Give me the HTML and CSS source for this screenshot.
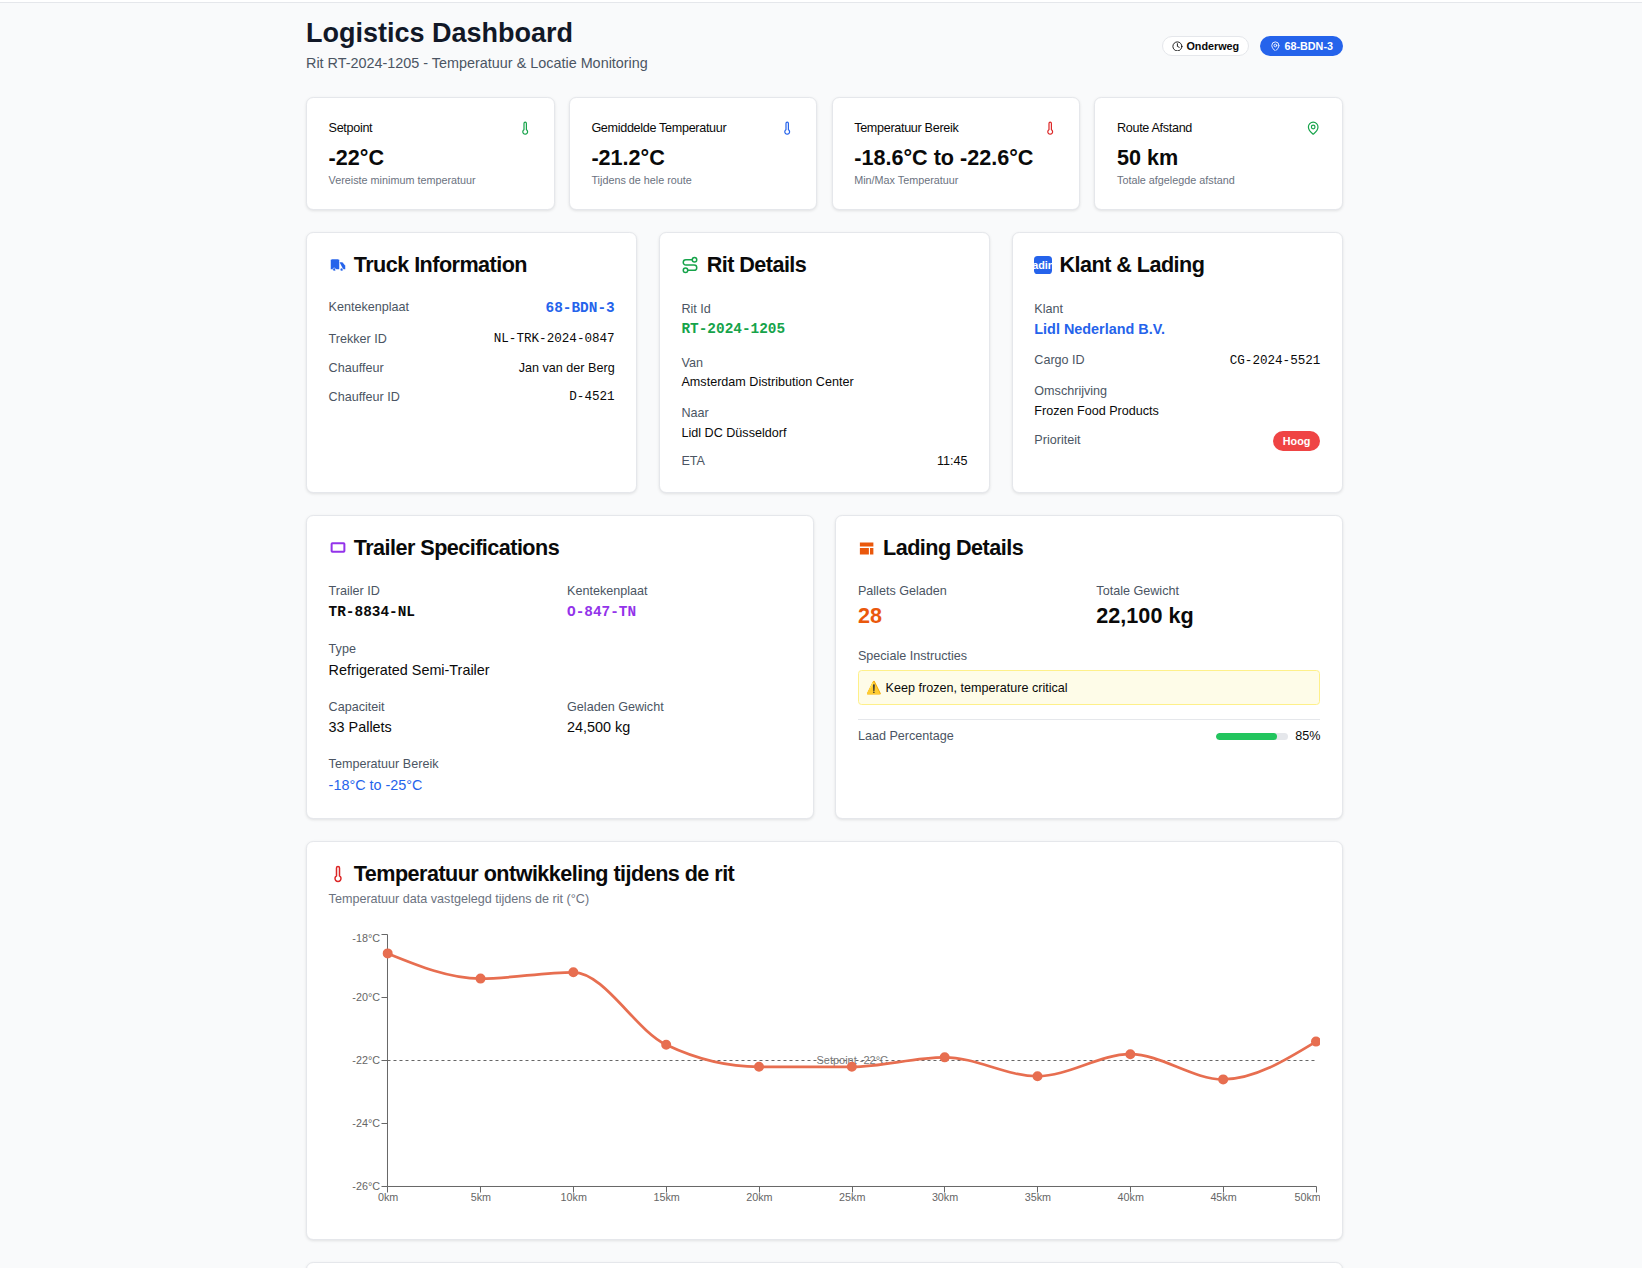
FILE: index.html
```html
<!DOCTYPE html>
<html>
<head>
<meta name="viewport" content="width=device-width, initial-scale=1">
<title>Logistics Dashboard</title>
<link rel="stylesheet" href="styles.css">
</head>
<body>
<div class="topbar"></div>
<div class="page">

  <header class="header">
    <div>
      <h1 class="page-title">Logistics Dashboard</h1>
      <p class="page-sub">Rit RT-2024-1205 - Temperatuur &amp; Locatie Monitoring</p>
    </div>
    <div class="header-badges">
      <span class="badge badge-outline">
        <svg class="badge-icon" viewBox="0 0 24 24"><circle cx="12" cy="12" r="10"/><path d="M12 6v6l4 2"/></svg>
        Onderweg
      </span>
      <span class="badge badge-blue">
        <svg class="badge-icon" viewBox="0 0 24 24"><path d="M20 10c0 5-5.5 10.2-7.4 11.8a1 1 0 0 1-1.2 0C9.5 20.2 4 15 4 10a8 8 0 0 1 16 0"/><circle cx="12" cy="10" r="3"/></svg>
        68-BDN-3
      </span>
    </div>
  </header>

  <!-- stats -->
  <section class="stats">
    <div class="card stat">
      <div class="stat-head">
        <span class="stat-label">Setpoint</span>
        <svg class="stat-icon green" viewBox="0 0 24 24"><path d="M14 4v10.54a4 4 0 1 1-4 0V4a2 2 0 0 1 4 0Z"/></svg>
      </div>
      <div class="stat-value">-22°C</div>
      <div class="stat-sub">Vereiste minimum temperatuur</div>
    </div>
    <div class="card stat">
      <div class="stat-head">
        <span class="stat-label">Gemiddelde Temperatuur</span>
        <svg class="stat-icon blue" viewBox="0 0 24 24"><path d="M14 4v10.54a4 4 0 1 1-4 0V4a2 2 0 0 1 4 0Z"/></svg>
      </div>
      <div class="stat-value">-21.2°C</div>
      <div class="stat-sub">Tijdens de hele route</div>
    </div>
    <div class="card stat">
      <div class="stat-head">
        <span class="stat-label">Temperatuur Bereik</span>
        <svg class="stat-icon red" viewBox="0 0 24 24"><path d="M14 4v10.54a4 4 0 1 1-4 0V4a2 2 0 0 1 4 0Z"/></svg>
      </div>
      <div class="stat-value">-18.6°C to -22.6°C</div>
      <div class="stat-sub">Min/Max Temperatuur</div>
    </div>
    <div class="card stat">
      <div class="stat-head">
        <span class="stat-label">Route Afstand</span>
        <svg class="stat-icon green" viewBox="0 0 24 24"><path d="M20 10c0 5-5.5 10.2-7.4 11.8a1 1 0 0 1-1.2 0C9.5 20.2 4 15 4 10a8 8 0 0 1 16 0"/><circle cx="12" cy="10" r="3"/></svg>
      </div>
      <div class="stat-value">50 km</div>
      <div class="stat-sub">Totale afgelegde afstand</div>
    </div>
  </section>

  <!-- truck / rit / klant -->
  <section class="three-cols">
    <div class="card panel">
      <h2 class="card-title">
        <svg class="title-icon truck-icon" viewBox="0 0 24 24"><path d="M14 18V6a2 2 0 0 0-2-2H4a2 2 0 0 0-2 2v11a1 1 0 0 0 1 1h2"/><path d="M15 18H9"/><path d="M19 18h2a1 1 0 0 0 1-1v-3.65a1 1 0 0 0-.22-.624l-3.48-4.35A1 1 0 0 0 17.52 8H14"/><circle cx="17" cy="18" r="2"/><circle cx="7" cy="18" r="2"/></svg>
        Truck Information
      </h2>
      <div class="truck-rows">
        <div class="row plate-row"><span class="label label-up">Kentekenplaat</span><span class="mono-bold blue-text">68-BDN-3</span></div>
        <div class="row"><span class="label">Trekker ID</span><span class="mono">NL-TRK-2024-0847</span></div>
        <div class="row"><span class="label">Chauffeur</span><span class="value-sm">Jan van der Berg</span></div>
        <div class="row"><span class="label">Chauffeur ID</span><span class="mono">D-4521</span></div>
      </div>
    </div>

    <div class="card panel">
      <h2 class="card-title">
        <svg class="title-icon green" viewBox="0 0 24 24"><circle cx="6" cy="19" r="3"/><path d="M9 19h8.5a3.5 3.5 0 0 0 0-7h-11a3.5 3.5 0 0 1 0-7H15"/><circle cx="18" cy="5" r="3"/></svg>
        Rit Details
      </h2>
      <div class="field rit-first">
        <div class="label field-label label-low">Rit Id</div>
        <div class="mono-bold green-text field-big">RT-2024-1205</div>
      </div>
      <div class="field rit-mid">
        <div class="label field-label label-low">Van</div>
        <div class="value-sm">Amsterdam Distribution Center</div>
      </div>
      <div class="field rit-last">
        <div class="label field-label">Naar</div>
        <div class="value-sm">Lidl DC Düsseldorf</div>
      </div>
      <div class="row"><span class="label">ETA</span><span class="value-sm">11:45</span></div>
    </div>

    <div class="card panel">
      <h2 class="card-title">
        <span class="title-chip">Lading</span>
        Klant &amp; Lading
      </h2>
      <div class="field">
        <div class="label field-label label-low">Klant</div>
        <div class="klant-name">Lidl Nederland B.V.</div>
      </div>
      <div class="row cargo-row"><span class="label label-up">Cargo ID</span><span class="mono">CG-2024-5521</span></div>
      <div class="field omschrijving">
        <div class="label field-label">Omschrijving</div>
        <div class="value-sm">Frozen Food Products</div>
      </div>
      <div class="row priority-row"><span class="label">Prioriteit</span><span class="badge badge-red">Hoog</span></div>
    </div>
  </section>

  <!-- trailer / lading -->
  <section class="two-cols">
    <div class="card panel">
      <h2 class="card-title">
        <svg class="title-icon trailer-icon" viewBox="0 0 24 24"><rect x="3.5" y="5.7" width="17" height="11.4" rx="1"/></svg>
        Trailer Specifications
      </h2>
      <div class="spec-grid">
        <div>
          <div class="label field-label">Trailer ID</div>
          <div class="mono-bold field-big">TR-8834-NL</div>
        </div>
        <div>
          <div class="label field-label">Kentekenplaat</div>
          <div class="mono-bold purple-text field-big">O-847-TN</div>
        </div>
        <div class="span-2 type-field">
          <div class="label field-label">Type</div>
          <div class="value">Refrigerated Semi-Trailer</div>
        </div>
        <div>
          <div class="label field-label label-low">Capaciteit</div>
          <div class="value">33 Pallets</div>
        </div>
        <div>
          <div class="label field-label label-low">Geladen Gewicht</div>
          <div class="value">24,500 kg</div>
        </div>
        <div class="span-2">
          <div class="label field-label">Temperatuur Bereik</div>
          <div class="value blue-text">-18°C to -25°C</div>
        </div>
      </div>
    </div>

    <div class="card panel">
      <h2 class="card-title">
        <svg class="title-icon cargo-icon" viewBox="0 0 24 24"><path d="M2.5 4.5h18V10h-18zM2.5 12h12v8.5h-12zM16 12h4.5v8.5H16z"/></svg>
        Lading Details
      </h2>
      <div class="load-grid">
        <div>
          <div class="label field-label">Pallets Geladen</div>
          <div class="big-num orange-text">28</div>
        </div>
        <div>
          <div class="label field-label">Totale Gewicht</div>
          <div class="big-num">22,100 kg</div>
        </div>
      </div>
      <div class="label field-label">Speciale Instructies</div>
      <div class="note">⚠️ Keep frozen, temperature critical</div>
      <div class="load-row">
        <span class="label">Laad Percentage</span>
        <div class="load-progress">
          <div class="bar"><div class="bar-fill" style="width:85%"></div></div>
          <span class="value-sm">85%</span>
        </div>
      </div>
    </div>
  </section>

  <!-- chart -->
  <section class="card panel chart-card">
    <h2 class="card-title">
      <svg class="title-icon red" viewBox="0 0 24 24"><path d="M14 4v10.54a4 4 0 1 1-4 0V4a2 2 0 0 1 4 0Z"/></svg>
      Temperatuur ontwikkeling tijdens de rit
    </h2>
    <p class="chart-sub">Temperatuur data vastgelegd tijdens de rit (°C)</p>
    <svg class="chart" width="991.8" height="288" viewBox="0 0 991.8 288">
      <!-- axes -->
      <path class="axis" d="M58.5 5.5V257.5H987.5"/>
      <path class="axis" d="M52.5 5.5h6M52.5 68.5h6M52.5 131.5h6M52.5 194.5h6M52.5 257.5h6"/>
      <path class="axis" d="M58.5 257.5v6M151.5 257.5v6M244.5 257.5v6M337.5 257.5v6M430.5 257.5v6M523.5 257.5v6M615.5 257.5v6M708.5 257.5v6M801.5 257.5v6M894.5 257.5v6M987.5 257.5v6"/>
      <g class="tick tick-y">
        <text x="51" y="12.9">-18°C</text>
        <text x="51" y="71.8">-20°C</text>
        <text x="51" y="134.8">-22°C</text>
        <text x="51" y="197.8">-24°C</text>
        <text x="51" y="260.8">-26°C</text>
      </g>
      <g class="tick tick-x">
        <text x="59.1" y="272.5">0km</text>
        <text x="151.93" y="272.5">5km</text>
        <text x="244.76" y="272.5">10km</text>
        <text x="337.59" y="272.5">15km</text>
        <text x="430.42" y="272.5">20km</text>
        <text x="523.25" y="272.5">25km</text>
        <text x="616.08" y="272.5">30km</text>
        <text x="708.91" y="272.5">35km</text>
        <text x="801.74" y="272.5">40km</text>
        <text x="894.57" y="272.5">45km</text>
        <text x="991.8" y="272.5" class="tick-end">50km</text>
      </g>
      <!-- setpoint -->
      <line class="setpoint" x1="58.5" y1="131.5" x2="987.5" y2="131.5"/>
      <text class="tick setpoint-label" x="523.25" y="134.8">Setpoint -22°C</text>
      <!-- temperature line -->
      <g transform="translate(-0.4 -0.4)">
        <path class="temp-line" d="M59.1 24.8C90.04 37.4 120.99 50 151.93 50C182.87 50 213.82 43.7 244.76 43.7C275.7 43.7 306.65 101.45 337.59 116.15C368.53 130.85 399.48 138.2 430.42 138.2C461.36 138.2 492.31 138.2 523.25 138.2C554.19 138.2 585.14 128.75 616.08 128.75C647.02 128.75 677.97 147.65 708.91 147.65C739.85 147.65 770.8 125.6 801.74 125.6C832.68 125.6 863.63 150.8 894.57 150.8C925.51 150.8 956.46 131.9 987.4 113"/>
        <g class="temp-dots">
          <circle cx="59.1" cy="24.8" r="4"/>
          <circle cx="151.93" cy="50" r="4"/>
          <circle cx="244.76" cy="43.7" r="4"/>
          <circle cx="337.59" cy="116.15" r="4"/>
          <circle cx="430.42" cy="138.2" r="4"/>
          <circle cx="523.25" cy="138.2" r="4"/>
          <circle cx="616.08" cy="128.75" r="4"/>
          <circle cx="708.91" cy="147.65" r="4"/>
          <circle cx="801.74" cy="125.6" r="4"/>
          <circle cx="894.57" cy="150.8" r="4"/>
          <circle cx="987.4" cy="113" r="4"/>
        </g>
      </g>
    </svg>
  </section>

  <section class="card panel next-card"></section>

</div>
</body>
</html>
```

FILE: styles.css
```css
* {
  box-sizing: border-box;
}

html, body {
  margin: 0;
  height: 1268px;
  overflow: hidden;
}

body {
  background: #f9fafb;
  color: #0a0a0a;
  font-family: "Liberation Sans", Arial, sans-serif;
  font-size: 14.4px;
  line-height: 21.6px;
}

h1, h2, p {
  margin: 0;
}

.topbar {
  height: 3px;
  background: #fff;
  border-bottom: 1px solid #e5e7eb;
}

.page {
  width: 1037px;
  margin-left: 306px;
  padding-top: 14px;
}

/* header */
.header {
  display: flex;
  justify-content: space-between;
  align-items: center;
  margin-bottom: 22.7px;
}

.page-title {
  font-size: 27px;
  line-height: 32.4px;
  font-weight: 700;
  color: #111827;
}

.page-sub {
  margin-top: 3.6px;
  color: #4b5563;
}

.header-badges {
  display: flex;
  gap: 10.8px;
  padding-top: 0.4px;
}

.badge {
  display: inline-flex;
  align-items: center;
  height: 19.8px;
  padding: 0 9px;
  border: 1px solid transparent;
  border-radius: 999px;
  font-size: 10.8px;
  line-height: 14.4px;
  font-weight: 700;
  white-space: nowrap;
}

.badge-outline {
  background: #fff;
  border-color: #e5e7eb;
}

.badge-blue {
  background: #2563eb;
  color: #fff;
}

.badge-red {
  background: #ef4444;
  color: #fff;
}

.badge-icon {
  width: 10.8px;
  height: 10.8px;
  margin-right: 3.6px;
  fill: none;
  stroke: currentColor;
  stroke-width: 2;
  stroke-linecap: round;
  stroke-linejoin: round;
}

/* cards */
.card {
  background: #fff;
  border: 1px solid #e5e7eb;
  border-radius: 7.2px;
  box-shadow: 0 1px 3px rgba(0, 0, 0, 0.1);
}

.stats {
  display: grid;
  grid-template-columns: repeat(4, minmax(0, 1fr));
  gap: 14.2px;
  margin-bottom: 22.6px;
}

.stat {
  height: 112.6px;
  padding: 21.6px;
}

.stat-head {
  display: flex;
  justify-content: space-between;
  align-items: center;
  height: 18px;
  margin-bottom: 6.2px;
}

.stat-label {
  font-size: 12.6px;
  letter-spacing: -0.315px;
}

.stat-icon {
  width: 14.4px;
  height: 14.4px;
  margin-bottom: 2px;
  fill: none;
  stroke-width: 2;
  stroke-linecap: round;
  stroke-linejoin: round;
}

.stat-value {
  font-size: 21.6px;
  line-height: 28.8px;
  font-weight: 700;
}

.stat-sub {
  font-size: 10.8px;
  line-height: 14.4px;
  color: #6b7280;
}

.green { stroke: #16a34a; }
.blue { stroke: #2563eb; }
.red { stroke: #dc2626; }

.blue-text { color: #2563eb; }
.green-text { color: #16a34a; }
.purple-text { color: #9333ea; }
.orange-text { color: #ea580c; }

.three-cols {
  display: grid;
  grid-template-columns: repeat(3, minmax(0, 1fr));
  gap: 21.6px;
  margin-bottom: 22.6px;
}

.three-cols .panel {
  height: 260.2px;
}

.two-cols {
  display: grid;
  grid-template-columns: repeat(2, minmax(0, 1fr));
  gap: 21.6px;
  margin-bottom: 22.6px;
}

.two-cols .panel {
  height: 303.4px;
}

.panel {
  padding: 21.6px;
}

.card-title {
  display: flex;
  align-items: center;
  gap: 7.2px;
  height: 18px;
  margin-top: 1px;
  margin-bottom: 24.9px;
  font-size: 21.6px;
  line-height: 18px;
  font-weight: 700;
  letter-spacing: -0.54px;
}

.title-icon {
  flex: none;
  width: 18px;
  height: 18px;
  fill: none;
  stroke-width: 2;
  stroke-linecap: round;
  stroke-linejoin: round;
}

.truck-icon {
  fill: #2563eb;
  stroke: #fff;
  stroke-width: 0.7;
}

.trailer-icon {
  stroke: #9333ea;
  stroke-width: 2.67;
}

.cargo-icon {
  fill: #ea580c;
}

.title-chip {
  flex: none;
  display: flex;
  justify-content: center;
  width: 18px;
  height: 18px;
  overflow: hidden;
  border-radius: 3.6px;
  background: #2563eb;
  color: #fff;
  font-size: 10.8px;
  line-height: 18px;
  font-weight: 700;
  letter-spacing: 0;
}

/* rows and fields */
.row {
  display: flex;
  justify-content: space-between;
  align-items: flex-start;
  min-height: 18px;
}

.label {
  font-size: 12.6px;
  line-height: 18px;
  color: #4b5563;
}

.field-label {
  height: 20px;
}

.label-low {
  padding-top: 1px;
}

.label-up {
  margin-top: -1px;
}

.value-sm {
  font-size: 12.6px;
  line-height: 18px;
}

.value {
  line-height: 21.6px;
}

.mono {
  font-family: "Liberation Mono", "Courier New", monospace;
  font-size: 12.6px;
  line-height: 18px;
}

.mono-bold {
  font-family: "Liberation Mono", "Courier New", monospace;
  font-size: 14.4px;
  line-height: 18px;
  font-weight: 700;
}

.field-big {
  line-height: 21.6px;
}

.truck-rows {
  display: flex;
  flex-direction: column;
  gap: 10.8px;
}

.plate-row {
  min-height: 20.4px;
}

.rit-first { margin-bottom: 12px; }
.rit-mid { margin-bottom: 13px; }
.rit-last { margin-bottom: 10.5px; }

.cargo-row {
  margin-top: 11.5px;
}

.omschrijving {
  margin-top: 11.5px;
}

.priority-row {
  margin-top: 11.5px;
}

.klant-name {
  font-size: 14.4px;
  line-height: 21.6px;
  font-weight: 700;
  color: #2563eb;
}

.spec-grid {
  display: grid;
  grid-template-columns: repeat(2, minmax(0, 1fr));
  gap: 16px 14.4px;
  margin-top: 0.3px;
}

.type-field {
  margin-top: 1px;
  margin-bottom: -1px;
}

.span-2 {
  grid-column: span 2;
}

.load-grid {
  display: grid;
  grid-template-columns: repeat(2, minmax(0, 1fr));
  gap: 14.4px;
  margin-bottom: 16.6px;
}

.big-num {
  font-size: 21.6px;
  line-height: 28.8px;
  font-weight: 700;
}

.note {
  margin-top: 3px;
  padding: 8px 7.2px 6.4px;
  background: #fefce8;
  border: 1px solid #fef08a;
  border-radius: 3.6px;
  font-size: 12.6px;
  line-height: 18px;
}

.load-row {
  display: flex;
  justify-content: space-between;
  align-items: center;
  margin-top: 14.4px;
  padding-top: 7.2px;
  border-top: 1px solid #e5e7eb;
}

.load-progress {
  display: flex;
  align-items: center;
  gap: 7.2px;
}

.bar {
  width: 72px;
  height: 7.2px;
  border-radius: 999px;
  background: #e5e7eb;
  overflow: hidden;
}

.bar-fill {
  height: 100%;
  border-radius: 999px;
  background: #22c55e;
}

/* chart */
.chart-card {
  height: 398.4px;
  margin-bottom: 22.6px;
}

.chart-card .card-title {
  margin-bottom: 7px;
}

.chart-sub {
  font-size: 12.6px;
  line-height: 18px;
  color: #6b7280;
  margin-bottom: 20.7px;
}

.chart {
  display: block;
}

.axis {
  fill: none;
  stroke: #666;
  stroke-width: 1;
}

.tick {
  font-size: 10.8px;
  fill: #666;
}

.tick-y text {
  text-anchor: end;
}

.tick-x text {
  text-anchor: middle;
}

.tick-x .tick-end {
  text-anchor: end;
}

.setpoint {
  stroke: #666;
  stroke-dasharray: 3 3;
}

.setpoint-label {
  font-size: 11px;
  fill: #777;
  text-anchor: middle;
}

.temp-line {
  fill: none;
  stroke: #e76e50;
  stroke-width: 2.7;
}

.temp-dots circle {
  fill: #e76e50;
  stroke: #e76e50;
  stroke-width: 2;
}

.next-card {
  height: 300px;
}
```
